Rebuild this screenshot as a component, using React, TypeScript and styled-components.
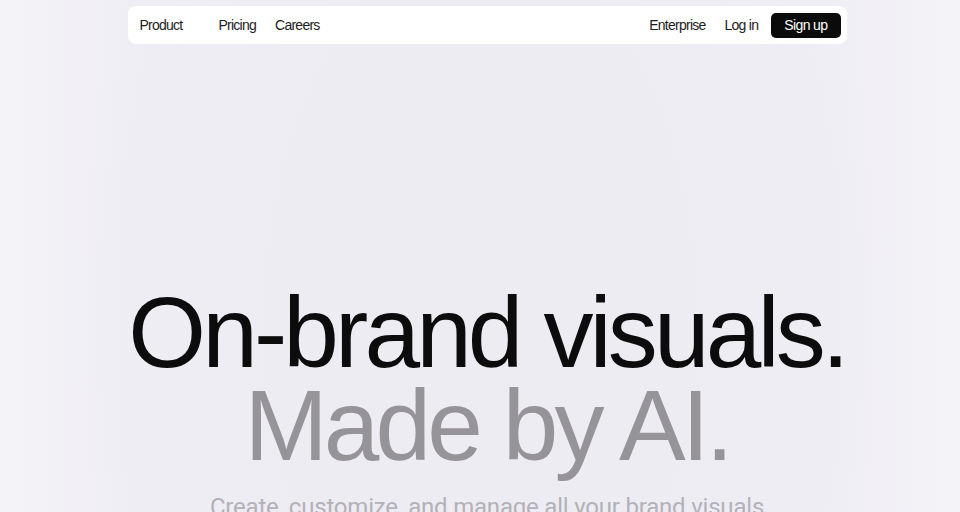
import * as React from 'react';
import styled, { createGlobalStyle } from 'styled-components';

const GlobalStyle = createGlobalStyle`
	html, body {
		margin: 0;
		padding: 0;
		background: #f3f2f6;
		overflow: hidden;
	}
	body {
		font-family: 'Liberation Sans', Arial, sans-serif;
		-webkit-font-smoothing: antialiased;
	}
`;

const Page = styled.div`
	height: 512px;
	box-sizing: border-box;
	padding-left: 14px;
	overflow: hidden;
	background:
		radial-gradient(ellipse 300px 520px at 50% 62%, #eeecf3 0%, #eeecf3 70%, rgba(238, 236, 243, 0) 100%),
		radial-gradient(ellipse 420px 640px at 50% 62%, #efedf4 0%, #efedf4 75%, rgba(239, 237, 244, 0) 100%),
		linear-gradient(90deg, #f4f3f7 0%, #f0eef5 14%, #efedf4 50%, #f0eef5 86%, #f4f3f7 100%);
	display: flex;
	flex-direction: column;
	align-items: center;
`;

const NavBar = styled.nav`
	flex-shrink: 0;
	margin-top: 6px;
	width: 719px;
	height: 38px;
	box-sizing: border-box;
	background: #ffffff;
	border-radius: 8px;
	display: flex;
	align-items: center;
	justify-content: space-between;
	padding: 0 6px 0 12px;
`;

const NavGroup = styled.div`
	display: flex;
	align-items: center;
	gap: 19px;
`;

const NavLink = styled.a<{ $wide?: boolean }>`
	font-size: 14px;
	letter-spacing: -0.75px;
	color: #1d1c20;
	text-decoration: none;
	margin-right: ${(p) => (p.$wide ? '17px' : '0')};
`;

const SignUp = styled.a`
	display: flex;
	align-items: center;
	height: 25px;
	padding: 0 13px;
	border-radius: 5px;
	background: #0b0b0c;
	color: #ffffff;
	font-size: 14px;
	letter-spacing: -0.6px;
	text-decoration: none;
	margin-left: -6px;
`;

const Hero = styled.section`
	flex-shrink: 0;
	margin-top: 242px;
	display: flex;
	flex-direction: column;
	align-items: center;
	text-align: center;
`;

const Headline = styled.h1`
	margin: 0;
	font-weight: 400;
	font-size: 100px;
	line-height: 93px;
	letter-spacing: -3.9px;
	white-space: nowrap;
`;

const HeadLine = styled.span<{ $muted?: boolean }>`
	display: block;
	color: ${(p) => (p.$muted ? '#969499' : '#0c0c0d')};
`;

const Sub = styled.p`
	margin: 21px 0 0;
	font-family: Roboto, 'Liberation Sans', sans-serif;
	font-size: 24px;
	line-height: 28px;
	letter-spacing: -0.2px;
	color: #b3b1b8;
	white-space: nowrap;
`;

export default function App() {
	return (
		<>
			<GlobalStyle />
			<Page>
				<NavBar>
					<NavGroup>
						<NavLink href="#" $wide>
							Product
						</NavLink>
						<NavLink href="#">Pricing</NavLink>
						<NavLink href="#">Careers</NavLink>
					</NavGroup>
					<NavGroup>
						<NavLink href="#">Enterprise</NavLink>
						<NavLink href="#">Log in</NavLink>
						<SignUp href="#">Sign up</SignUp>
					</NavGroup>
				</NavBar>
				<Hero>
					<Headline>
						<HeadLine>On-brand visuals.</HeadLine>
						<HeadLine $muted>Made by AI.</HeadLine>
					</Headline>
					<Sub>Create, customize, and manage all your brand visuals</Sub>
				</Hero>
			</Page>
		</>
	);
}
